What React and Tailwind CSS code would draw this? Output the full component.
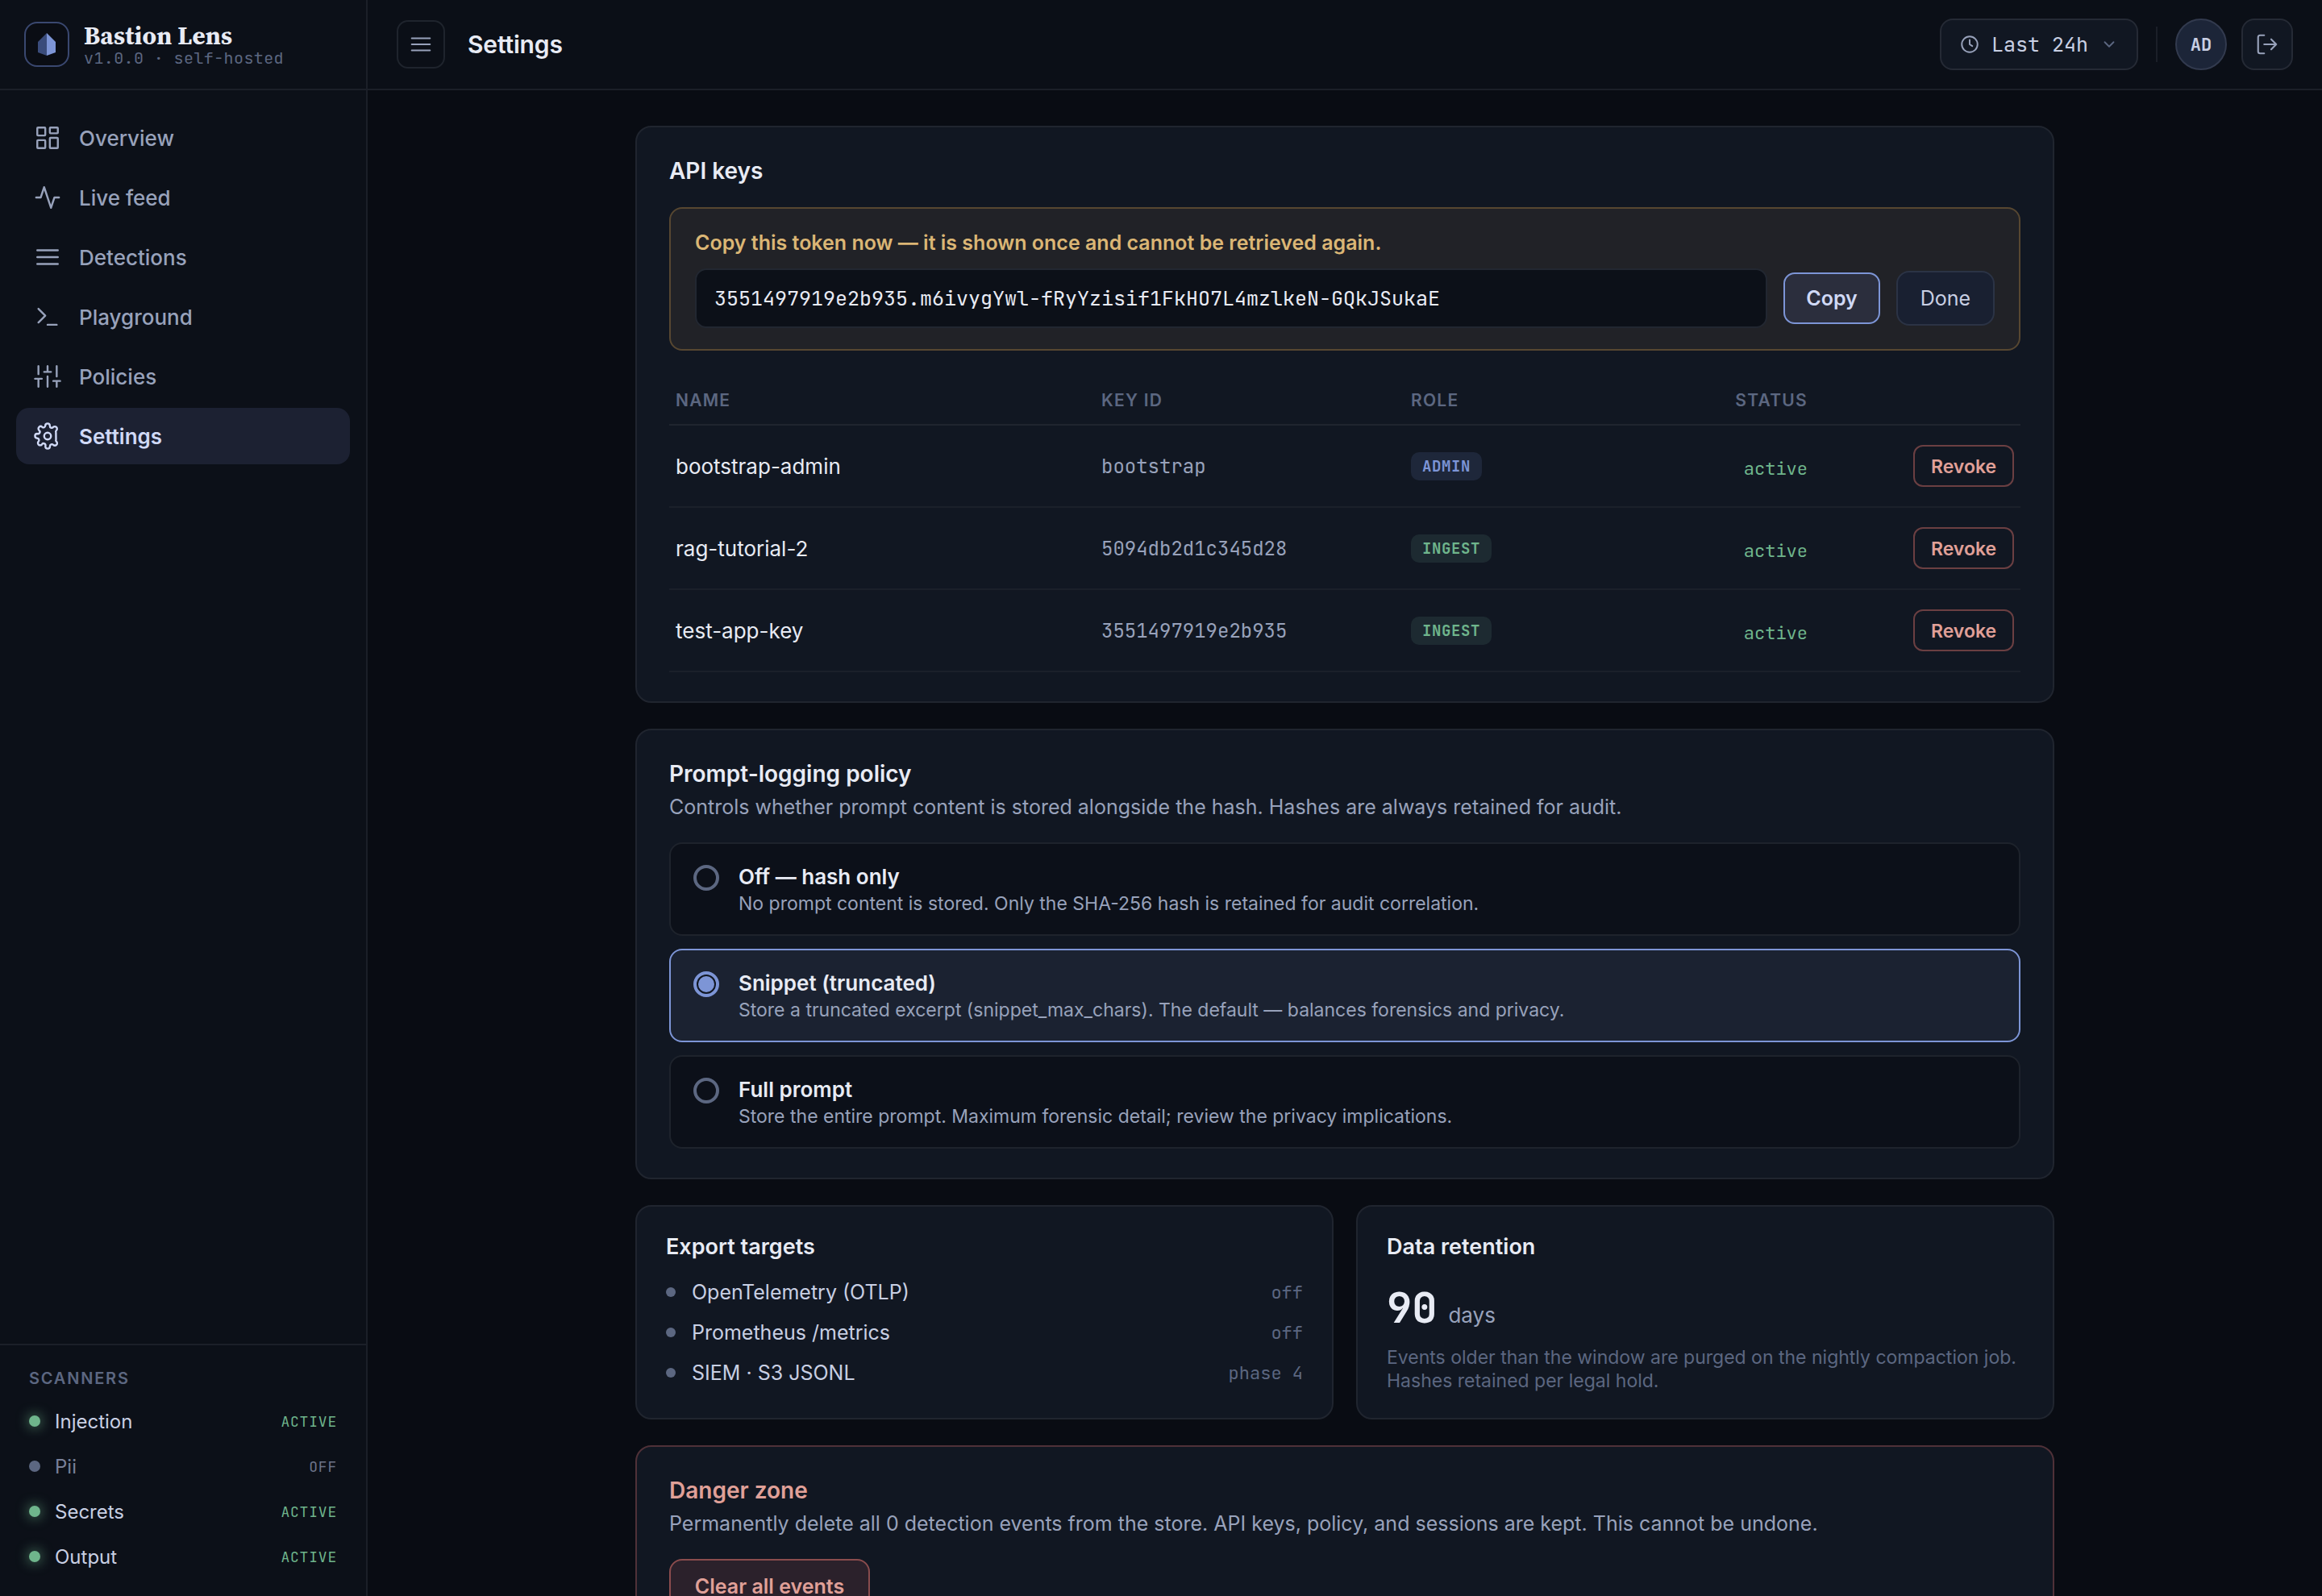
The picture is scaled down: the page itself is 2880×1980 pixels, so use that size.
import React from "react";

const MONO = "font-['JetBrains_Mono','DejaVu_Sans_Mono','Liberation_Mono',monospace]";

function Icon({ className, children, strokeWidth = 1.7 }) {
  return (
    <svg
      viewBox="0 0 24 24"
      fill="none"
      stroke="currentColor"
      strokeWidth={strokeWidth}
      strokeLinecap="round"
      strokeLinejoin="round"
      className={`shrink-0 ${className}`}
    >
      {children}
    </svg>
  );
}

const LINES = <path d="M3 6h18M3 12h18M3 18h18" />;

const NAV = [
  {
    label: "Overview",
    icon: (
      <>
        <rect x="3" y="3" width="7" height="7" rx=".6" />
        <rect x="14" y="3" width="7" height="5" rx=".6" />
        <rect x="14" y="12" width="7" height="9" rx=".6" />
        <rect x="3" y="14" width="7" height="7" rx=".6" />
      </>
    ),
  },
  { label: "Live feed", icon: <path d="M22 12h-4l-3 9L9 3l-3 9H2" /> },
  { label: "Detections", icon: LINES },
  { label: "Playground", icon: <path d="m4 17 6-6-6-6M12 19h8" /> },
  {
    label: "Policies",
    icon: <path d="M4 21v-7M4 10V3M12 21v-9M12 8V3M20 21v-5M20 12V3M1 14h6M9 8h6M17 16h6" />,
  },
  {
    label: "Settings",
    active: true,
    icon: (
      <>
        <circle cx="12" cy="12" r="3" />
        <path d="M19.4 15a1.65 1.65 0 0 0 .33 1.82l.06.06a2 2 0 1 1-2.83 2.83l-.06-.06a1.65 1.65 0 0 0-2.82 1.17V21a2 2 0 1 1-4 0v-.1A1.65 1.65 0 0 0 7 19.4l-.06.06a2 2 0 1 1-2.83-2.83l.06-.06A1.65 1.65 0 0 0 3 13.9H3a2 2 0 1 1 0-4h.1A1.65 1.65 0 0 0 4.6 7l-.06-.06a2 2 0 1 1 2.83-2.83l.06.06A1.65 1.65 0 0 0 10 3.1V3a2 2 0 1 1 4 0v.1a1.65 1.65 0 0 0 2.82 1.17l.06-.06a2 2 0 1 1 2.83 2.83l-.06.06a1.65 1.65 0 0 0-.33 1.82Z" />
      </>
    ),
  },
];

const SCANNERS = [
  { name: "Injection", on: true },
  { name: "Pii", on: false },
  { name: "Secrets", on: true },
  { name: "Output", on: true },
];

const KEYS = [
  { name: "bootstrap-admin", id: "bootstrap", role: "ADMIN" },
  { name: "rag-tutorial-2", id: "5094db2d1c345d28", role: "INGEST" },
  { name: "test-app-key", id: "3551497919e2b935", role: "INGEST" },
];

const POLICIES = [
  {
    title: "Off — hash only",
    text: "No prompt content is stored. Only the SHA-256 hash is retained for audit correlation.",
  },
  {
    title: "Snippet (truncated)",
    text: "Store a truncated excerpt (snippet_max_chars). The default — balances forensics and privacy.",
    selected: true,
  },
  {
    title: "Full prompt",
    text: "Store the entire prompt. Maximum forensic detail; review the privacy implications.",
  },
];

const TARGETS = [
  ["OpenTelemetry (OTLP)", "off"],
  ["Prometheus /metrics", "off"],
  ["SIEM · S3 JSONL", "phase 4"],
];

function Sidebar() {
  return (
    <aside className="flex w-[456px] shrink-0 flex-col border-r-2 border-[#1b1f28] bg-[#0c1018]">
      <div className="flex h-[112px] shrink-0 items-center gap-[18px] border-b-2 border-[#1b1f28] pl-[30px]">
        <div className="flex size-14 items-center justify-center rounded-2xl border-2 border-[#3a4870] bg-[#0a0d14]">
          <svg viewBox="0 0 22 28" className="h-7 w-[22px]">
            <path d="M11 0 0 11v13l11 4z" fill="#3a4c7b" />
            <path d="m11 0 11 11v13l-11 4z" fill="#7d95d6" />
          </svg>
        </div>
        <div>
          <div className="pt-px font-['Source_Serif_4','Liberation_Serif',serif] text-[31px] leading-[34px] font-bold tracking-[0.18px] whitespace-nowrap text-[#e8ebf4]">
            Bastion Lens
          </div>
          <div className={`${MONO} text-[20px] leading-[23px] tracking-[0.4px] whitespace-nowrap text-[#5c6781]`}>
            v1.0.0 · self-hosted
          </div>
        </div>
      </div>

      <nav className="flex flex-1 flex-col gap-1 px-5 pt-6">
        {NAV.map((item) => (
          <div
            key={item.label}
            className={`flex h-[70px] items-center gap-[22px] rounded-2xl px-[22px] text-[26px] leading-[36px] ${
              item.active ? "bg-[#1c2132] font-semibold text-[#d0d9f6]" : "font-medium text-[#98a2bb]"
            }`}
          >
            <Icon className="size-[34px]">{item.icon}</Icon>
            <span className="pt-[2px]">{item.label}</span>
          </div>
        ))}
      </nav>

      <div className="h-[313px] shrink-0 border-t-2 border-[#1b1f28] px-9 pt-[26px]">
        <div className="text-[20px] leading-[30px] font-semibold tracking-[1.8px] text-[#5c6781]">SCANNERS</div>
        <div className="mt-[10px]">
          {SCANNERS.map((s) => (
            <div key={s.name} className="flex h-14 items-center">
              <span
                className={`size-[14px] rounded-full ${
                  s.on ? "bg-[#6fb58c] shadow-[0_0_16px_rgba(111,181,140,0.85)]" : "bg-[#5c6781]"
                }`}
              />
              <span className={`ml-[18px] flex-1 pt-px text-[24px] leading-8 ${s.on ? "text-[#c8cfe3]" : "text-[#79819a]"}`}>
                {s.name}
              </span>
              <span
                className={`${MONO} pt-px text-[18px] leading-6 tracking-[0.8px] ${s.on ? "text-[#6fb58c]" : "text-[#6c748a]"}`}
              >
                {s.on ? "ACTIVE" : "OFF"}
              </span>
            </div>
          ))}
        </div>
      </div>
    </aside>
  );
}

function Header() {
  return (
    <header className="flex h-[112px] shrink-0 items-center border-b-2 border-[#1b1f28] bg-[#0b0f17] px-9">
      <button className="flex size-[60px] items-center justify-center rounded-[14px] border-2 border-[#1f242d] text-[#98a2bb]">
        <Icon className="size-[30px]">{LINES}</Icon>
      </button>
      <h1 className="ml-7 flex-1 text-[30px] leading-10 font-semibold tracking-[-0.15px] text-[#e8ebf4]">Settings</h1>
      <button className="flex h-16 w-[246px] items-center rounded-2xl border-2 border-[#252a35] bg-[#111722] pl-[22px]">
        <Icon className="size-[26px] text-[#98a2bb]" strokeWidth={1.8}>
          <circle cx="12" cy="12" r="9" />
          <path d="M12 7v5l3 2" />
        </Icon>
        <span className={`${MONO} ml-[14px] text-[25px] leading-8 whitespace-pre text-[#c8cfe3]`}>Last 24h</span>
        <Icon className="ml-[15px] size-[22px] text-[#5c6781]" strokeWidth={2}>
          <path d="m6 9 6 6 6-6" />
        </Icon>
      </button>
      <div className="mx-[22px] h-11 w-[2px] bg-[#1b1f28]" />
      <div
        className={`${MONO} flex size-16 items-center justify-center rounded-full border-2 border-[#323a4e] bg-[#1c2538] text-[22px] font-semibold text-[#c8cfe3]`}
      >
        AD
      </div>
      <button className="ml-[18px] flex size-16 items-center justify-center rounded-2xl border-2 border-[#252a35] bg-[#111722] text-[#98a2bb]">
        <Icon className="size-[30px]">
          <path d="m16 17 5-5-5-5M21 12H9M9 21H5a2 2 0 0 1-2-2V5a2 2 0 0 1 2-2h4" />
        </Icon>
      </button>
    </header>
  );
}

function ApiKeys() {
  const cols = "grid grid-cols-[528px_384px_254px_254px_256px] items-center";
  return (
    <section className="rounded-[20px] border-2 border-[#20252f] bg-[#111722] px-10 py-9">
      <h2 className="text-[28px] leading-9 font-semibold text-[#e8ebf4]">API keys</h2>
      <div className="mt-[27px] rounded-2xl border-2 border-[#574731] bg-[#212227] px-[30px] py-[26px]">
        <p className="text-[25px] leading-8 font-semibold text-[#dbb675]">
          Copy this token now — it is shown once and cannot be retrieved again.
        </p>
        <div className="mt-4 flex items-center gap-5">
          <code
            className={`${MONO} flex h-[74px] flex-1 items-center rounded-[14px] border-2 border-[#222731] bg-[#0c1018] px-[22px] pt-px text-[25px] text-[#e8ebf4]`}
          >
            3551497919e2b935.m6ivygYwl-fRyYzisif1FkHO7L4mzlkeN-GQkJSukaE
          </code>
          <button className="h-16 w-[120px] rounded-[14px] border-2 border-[#7d95d6] bg-[#2b2e3d] text-[25px] leading-8 font-semibold text-[#d0d9f6]">
            Copy
          </button>
          <button className="h-[68px] w-[122px] rounded-2xl border-2 border-[#2b3345] bg-[#192031] text-[25px] leading-8 text-[#c8cfe3]">
            Done
          </button>
        </div>
      </div>

      <div className="mt-8">
        <div
          className={`${cols} h-[61px] border-b-2 border-[#20252f] text-[21px] leading-7 font-semibold tracking-[1.26px] text-[#5c6781]`}
        >
          <span className="px-2">NAME</span>
          <span className="px-2">KEY ID</span>
          <span className="px-2">ROLE</span>
          <span className="px-2 text-right">STATUS</span>
          <span />
        </div>
        {KEYS.map((k) => (
          <div key={k.name} className={`${cols} h-[102px] border-b-2 border-[#1b202a]`}>
            <span className="px-2 pt-[2px] text-[26px] leading-9 text-[#e8ebf4]">{k.name}</span>
            <span className={`${MONO} px-2 pt-[2px] text-[24px] leading-8 text-[#98a2bb]`}>{k.id}</span>
            <span className="flex px-2">
              <span
                className={`${MONO} rounded-[10px] px-[14px] pt-px text-[19px] leading-[34px] font-semibold tracking-[0.6px] ${
                  k.role === "ADMIN" ? "bg-[#1e273a] text-[#7d95d6]" : "bg-[#1d2a31] text-[#6fb58c]"
                }`}
              >
                {k.role}
              </span>
            </span>
            <span className={`${MONO} px-2 pt-2 text-right text-[22px] leading-7 text-[#6fb58c]`}>active</span>
            <span className="flex justify-end px-2">
              <button className="h-[52px] w-[125px] rounded-xl border-2 border-[#6b3f42] pt-px text-[23px] leading-7 font-semibold text-[#e0a098]">
                Revoke
              </button>
            </span>
          </div>
        ))}
      </div>
    </section>
  );
}

function LoggingPolicy() {
  return (
    <section className="rounded-[20px] border-2 border-[#20252f] bg-[#111722] px-10 py-9">
      <h2 className="text-[28px] leading-9 font-semibold text-[#e8ebf4]">Prompt-logging policy</h2>
      <p className="mt-[5px] text-[25px] leading-9 text-[#98a2bb]">
        Controls whether prompt content is stored alongside the hash. Hashes are always retained for audit.
      </p>
      <div className="mt-[26px] flex flex-col gap-4">
        {POLICIES.map((p) => (
          <div
            key={p.title}
            className={`flex h-[116px] gap-6 rounded-2xl border-2 px-7 pt-[23px] ${
              p.selected ? "border-[#7d95d6] bg-[#1b2231]" : "border-[#1e232c] bg-[#0c1019]"
            }`}
          >
            <span
              className={`mt-[3px] flex size-8 shrink-0 items-center justify-center rounded-full border-4 ${
                p.selected ? "border-[#7d95d6] bg-[#111722]" : "border-[#5c6781]"
              }`}
            >
              {p.selected && <span className="size-5 rounded-full bg-[#7d95d6]" />}
            </span>
            <div>
              <div className="text-[26px] leading-[36px] font-semibold text-[#e8ebf4]">{p.title}</div>
              <div className="text-[23px] leading-[31px] text-[#98a2bb]">{p.text}</div>
            </div>
          </div>
        ))}
      </div>
    </section>
  );
}

function ExportTargets() {
  return (
    <section className="h-[266px] rounded-[20px] border-2 border-[#20252f] bg-[#111722] px-9 pt-8">
      <h2 className="text-[27px] leading-9 font-semibold text-[#e8ebf4]">Export targets</h2>
      <div className="mt-[13px]">
        {TARGETS.map(([name, state]) => (
          <div key={name} className="flex h-[50px] items-center">
            <span className="size-3 rounded-full bg-[#5c6781]" />
            <span className="ml-5 flex-1 text-[25px] leading-8 text-[#c8cfe3]">{name}</span>
            <span className={`${MONO} pt-px text-[22px] leading-8 text-[#5c6781]`}>{state}</span>
          </div>
        ))}
      </div>
    </section>
  );
}

function Retention() {
  return (
    <section className="h-[266px] rounded-[20px] border-2 border-[#20252f] bg-[#111722] px-9 pt-8">
      <h2 className="text-[27px] leading-9 font-semibold text-[#e8ebf4]">Data retention</h2>
      <div className="mt-[28px] flex items-baseline gap-[14px]">
        <span className={`${MONO} text-[52px] leading-[60px] font-semibold text-[#e8ebf4]`}>90</span>
        <span className="text-[26px] leading-8 text-[#98a2bb]">days</span>
      </div>
      <p className="mt-[17px] text-[23px] leading-[29px] whitespace-nowrap text-[#5c6781]">
        Events older than the window are purged on the nightly compaction job.
        <br />
        Hashes retained per legal hold.
      </p>
    </section>
  );
}

function DangerZone() {
  return (
    <section className="rounded-[20px] border-2 border-[#4f3138] bg-[#111722] px-10 py-9">
      <h2 className="text-[28px] leading-9 font-semibold text-[#e0a098]">Danger zone</h2>
      <p className="mt-[5px] text-[25px] leading-9 text-[#98a2bb]">
        Permanently delete all 0 detection events from the store. API keys, policy, and sessions are kept. This cannot be
        undone.
      </p>
      <button className="mt-[26px] h-[68px] w-[249px] rounded-2xl border-2 border-[#8a4c4d] bg-[#2b212b] text-[25px] leading-8 font-semibold text-[#e0a098]">
        Clear all events
      </button>
    </section>
  );
}

export default function App() {
  return (
    <div className="flex h-[1980px] w-[2880px] overflow-hidden bg-[#090c13] font-['Inter',sans-serif] antialiased">
      <Sidebar />
      <div className="flex min-w-0 flex-1 flex-col">
        <Header />
        <main className="flex-1 overflow-hidden pt-11">
          <div className="mx-auto flex w-[1760px] flex-col gap-8">
            <ApiKeys />
            <LoggingPolicy />
            <div className="grid grid-cols-2 gap-7">
              <ExportTargets />
              <Retention />
            </div>
            <DangerZone />
          </div>
        </main>
      </div>
    </div>
  );
}
